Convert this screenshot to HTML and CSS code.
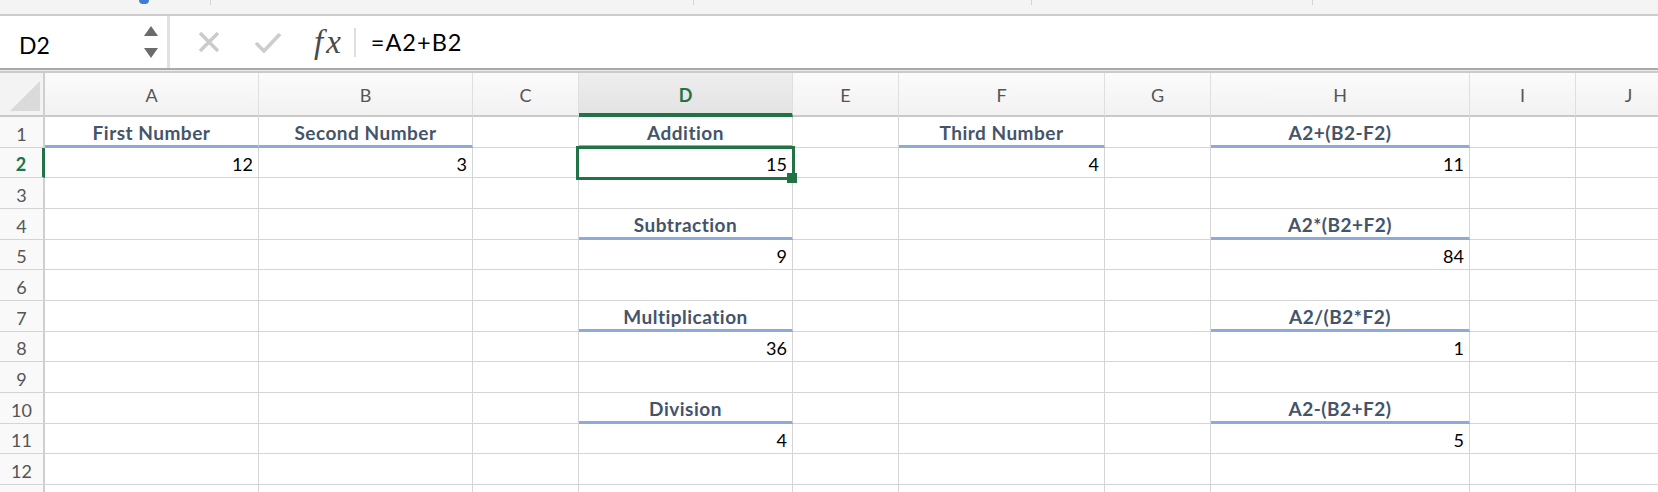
FILE: index.html
```html
<!DOCTYPE html>
<html>
<head>
    <meta charset="utf-8">
    <title>Formulas - Sheet1</title>
    <link rel="stylesheet" href="styles.css">
</head>
<body>

<div class="top-strip">
    <div class="strip-seg seg-1"><div class="strip-blob"></div></div>
    <div class="strip-seg seg-2"></div>
    <div class="strip-seg seg-3"></div>
    <div class="strip-seg seg-4"></div>
</div>

<div class="formula-bar">
    <div class="name-box">
        <span class="name-text">D2</span>
        <div class="spinner">
            <span class="spin-up"></span>
            <span class="spin-down"></span>
        </div>
    </div>

    <svg class="icon-cancel" width="22" height="22" viewBox="0 0 22 22">
        <path d="M2 2 L20 20 M20 2 L2 20" stroke="#cbcbcb" stroke-width="3.4" fill="none"/>
    </svg>

    <svg class="icon-enter" width="28" height="21" viewBox="0 0 28 21">
        <path d="M2 11 L10 19 L26 2" stroke="#cdcdcd" stroke-width="3.6" fill="none"/>
    </svg>

    <span class="fx-label">fx</span>
    <span class="fx-divider"></span>
    <span class="formula-text">=A2+B2</span>
</div>
<div class="bar-sep"></div>

<div class="sheet">

    <!-- column headers -->
    <div class="corner"><div class="corner-tri"></div></div>
    <div class="col-head">A</div>
    <div class="col-head">B</div>
    <div class="col-head">C</div>
    <div class="col-head selected">D</div>
    <div class="col-head">E</div>
    <div class="col-head">F</div>
    <div class="col-head">G</div>
    <div class="col-head">H</div>
    <div class="col-head">I</div>
    <div class="col-head">J</div>

    <!-- 1 -->
    <div class="cell row-head">1</div>
    <div class="cell head">First Number</div>
    <div class="cell head">Second Number</div>
    <div class="cell"></div>
    <div class="cell head">Addition</div>
    <div class="cell"></div>
    <div class="cell head">Third Number</div>
    <div class="cell"></div>
    <div class="cell head">A2+(B2-F2)</div>
    <div class="cell"></div>
    <div class="cell"></div>

    <!-- 2 -->
    <div class="cell row-head selected">2</div>
    <div class="cell num">12</div>
    <div class="cell num">3</div>
    <div class="cell"></div>
    <div class="cell num active">15
        <div class="active-frame"></div>
        <div class="fill-handle"></div>
    </div>
    <div class="cell"></div>
    <div class="cell num">4</div>
    <div class="cell"></div>
    <div class="cell num">11</div>
    <div class="cell"></div>
    <div class="cell"></div>

    <!-- 3 -->
    <div class="cell row-head">3</div>
    <div class="cell"></div>
    <div class="cell"></div>
    <div class="cell"></div>
    <div class="cell"></div>
    <div class="cell"></div>
    <div class="cell"></div>
    <div class="cell"></div>
    <div class="cell"></div>
    <div class="cell"></div>
    <div class="cell"></div>

    <!-- 4 -->
    <div class="cell row-head">4</div>
    <div class="cell"></div>
    <div class="cell"></div>
    <div class="cell"></div>
    <div class="cell head">Subtraction</div>
    <div class="cell"></div>
    <div class="cell"></div>
    <div class="cell"></div>
    <div class="cell head">A2*(B2+F2)</div>
    <div class="cell"></div>
    <div class="cell"></div>

    <!-- 5 -->
    <div class="cell row-head">5</div>
    <div class="cell"></div>
    <div class="cell"></div>
    <div class="cell"></div>
    <div class="cell num">9</div>
    <div class="cell"></div>
    <div class="cell"></div>
    <div class="cell"></div>
    <div class="cell num">84</div>
    <div class="cell"></div>
    <div class="cell"></div>

    <!-- 6 -->
    <div class="cell row-head">6</div>
    <div class="cell"></div>
    <div class="cell"></div>
    <div class="cell"></div>
    <div class="cell"></div>
    <div class="cell"></div>
    <div class="cell"></div>
    <div class="cell"></div>
    <div class="cell"></div>
    <div class="cell"></div>
    <div class="cell"></div>

    <!-- 7 -->
    <div class="cell row-head">7</div>
    <div class="cell"></div>
    <div class="cell"></div>
    <div class="cell"></div>
    <div class="cell head">Multiplication</div>
    <div class="cell"></div>
    <div class="cell"></div>
    <div class="cell"></div>
    <div class="cell head">A2/(B2*F2)</div>
    <div class="cell"></div>
    <div class="cell"></div>

    <!-- 8 -->
    <div class="cell row-head">8</div>
    <div class="cell"></div>
    <div class="cell"></div>
    <div class="cell"></div>
    <div class="cell num">36</div>
    <div class="cell"></div>
    <div class="cell"></div>
    <div class="cell"></div>
    <div class="cell num">1</div>
    <div class="cell"></div>
    <div class="cell"></div>

    <!-- 9 -->
    <div class="cell row-head">9</div>
    <div class="cell"></div>
    <div class="cell"></div>
    <div class="cell"></div>
    <div class="cell"></div>
    <div class="cell"></div>
    <div class="cell"></div>
    <div class="cell"></div>
    <div class="cell"></div>
    <div class="cell"></div>
    <div class="cell"></div>

    <!-- 10 -->
    <div class="cell row-head">10</div>
    <div class="cell"></div>
    <div class="cell"></div>
    <div class="cell"></div>
    <div class="cell head">Division</div>
    <div class="cell"></div>
    <div class="cell"></div>
    <div class="cell"></div>
    <div class="cell head">A2-(B2+F2)</div>
    <div class="cell"></div>
    <div class="cell"></div>

    <!-- 11 -->
    <div class="cell row-head">11</div>
    <div class="cell"></div>
    <div class="cell"></div>
    <div class="cell"></div>
    <div class="cell num">4</div>
    <div class="cell"></div>
    <div class="cell"></div>
    <div class="cell"></div>
    <div class="cell num">5</div>
    <div class="cell"></div>
    <div class="cell"></div>

    <!-- 12 -->
    <div class="cell row-head">12</div>
    <div class="cell"></div>
    <div class="cell"></div>
    <div class="cell"></div>
    <div class="cell"></div>
    <div class="cell"></div>
    <div class="cell"></div>
    <div class="cell"></div>
    <div class="cell"></div>
    <div class="cell"></div>
    <div class="cell"></div>

    <!-- 13, only its top edge shows -->
    <div class="cell row-head"></div>
    <div class="cell"></div>
    <div class="cell"></div>
    <div class="cell"></div>
    <div class="cell"></div>
    <div class="cell"></div>
    <div class="cell"></div>
    <div class="cell"></div>
    <div class="cell"></div>
    <div class="cell"></div>
    <div class="cell"></div>

</div>

</body>
</html>
```

FILE: styles.css
```css
* {
    box-sizing: border-box;
}

body {
    margin: 0;
    width: 1658px;
    height: 492px;
    overflow: hidden;
    background: #fff;
    font-family: Lato, "Liberation Sans", sans-serif;
}

/* leftover of the ribbon above the formula bar */
.top-strip {
    height: 16px;
    background: #f4f4f4;
    border-bottom: 2px solid #cdcdcd;
    display: flex;
    align-items: flex-start;
}

.strip-seg {
    height: 5px;
    border-right: 1px solid #d4d4d4;
}

.seg-1 { width: 211px; }
.seg-2 { width: 483px; }
.seg-3 { width: 338px; }
.seg-4 { width: 281px; }

.strip-blob {
    width: 10px;
    height: 4px;
    margin-left: 139px;
    background: #3d7dd2;
    border-radius: 0 0 5px 5px;
}

/* formula bar */
.formula-bar {
    height: 52px;
    display: flex;
    align-items: center;
}

.name-box {
    width: 170px;
    height: 100%;
    display: flex;
    align-items: center;
    justify-content: space-between;
    padding: 0 9px 0 19px;
    border-right: 3px solid #e1e1e1;
}

.name-text {
    font-size: 23px;
    color: #000;
    padding-top: 5px;
}

.spinner {
    display: flex;
    flex-direction: column;
    gap: 12px;
}

.spin-up,
.spin-down {
    width: 0;
    height: 0;
    border-left: 7px solid transparent;
    border-right: 7px solid transparent;
}

.spin-up {
    border-bottom: 10px solid #6b6b6b;
}

.spin-down {
    border-top: 10px solid #6b6b6b;
}

.icon-cancel {
    margin-left: 28px;
}

.icon-enter {
    margin-left: 34px;
}

.fx-label {
    margin-left: 32px;
    font-family: "Liberation Serif", serif;
    font-style: italic;
    font-size: 33px;
    letter-spacing: 3px;
    color: #4a4a4a;
    line-height: 1;
}

.fx-divider {
    width: 2px;
    height: 29px;
    margin-left: 10px;
    background: #dedede;
}

.formula-text {
    margin-left: 15px;
    font-size: 23.5px;
    letter-spacing: 1px;
    color: #000;
}

.bar-sep {
    height: 5px;
    background: linear-gradient(#a9a9a9 0 2px, #ececec 2px 3px, #cbcbcb 3px 5px);
}

/* the sheet grid */
.sheet {
    display: grid;
    grid-template-columns: 45px 214px 214px 106px 214px 106px 206px 106px 259px 106px 106px;
    grid-template-rows: 44px repeat(13, 30.67px);
    font-size: 18px;
}

.corner {
    background: #f3f3f3;
    border-right: 2px solid #cfcfcf;
    border-bottom: 2px solid #c9c9c9;
    display: flex;
    align-items: flex-end;
    justify-content: flex-end;
    padding: 0 3px 4px 0;
}

.corner-tri {
    width: 30px;
    height: 30px;
    background: #dadada;
    clip-path: polygon(100% 0, 100% 100%, 0 100%);
}

.col-head {
    background: linear-gradient(#fbfbfb, #f2f2f2);
    border-right: 1px solid #dfdfdf;
    border-bottom: 2px solid #c9c9c9;
    display: flex;
    align-items: center;
    justify-content: center;
    padding-top: 2px;
    color: #555;
}

.col-head.selected {
    background: linear-gradient(#eeeeee, #e3e3e3);
    border-bottom: 4px solid #217346;
    padding-top: 4px;
    color: #217346;
    font-weight: 700;
}

.cell {
    border-right: 1px solid #d5d5d5;
    border-bottom: 1px solid #d5d5d5;
    display: flex;
    align-items: flex-end;
    padding: 0 5px 4px;
    line-height: 18px;
    white-space: nowrap;
    color: #000;
}

.cell.num {
    justify-content: flex-end;
}

.cell.head {
    justify-content: center;
    font-size: 19px;
    letter-spacing: 0.5px;
    font-weight: 700;
    color: #44546a;
    border-bottom: 3px solid #8eaadb;
    padding-bottom: 3px;
}

.row-head {
    background: #f9f9f9;
    border-right: 2px solid #cfcfcf;
    justify-content: center;
    color: #555;
}

.row-head.selected {
    border-right: 3px solid #217346;
    color: #217346;
    font-weight: 700;
}

/* active cell D2 */
.active {
    position: relative;
}

.active-frame {
    position: absolute;
    left: -3px;
    right: -3px;
    top: -2px;
    bottom: -3px;
    border: 3px solid #217346;
    z-index: 2;
}

.fill-handle {
    position: absolute;
    right: -5px;
    bottom: -6px;
    width: 10px;
    height: 10px;
    background: #217346;
    z-index: 3;
}
```
